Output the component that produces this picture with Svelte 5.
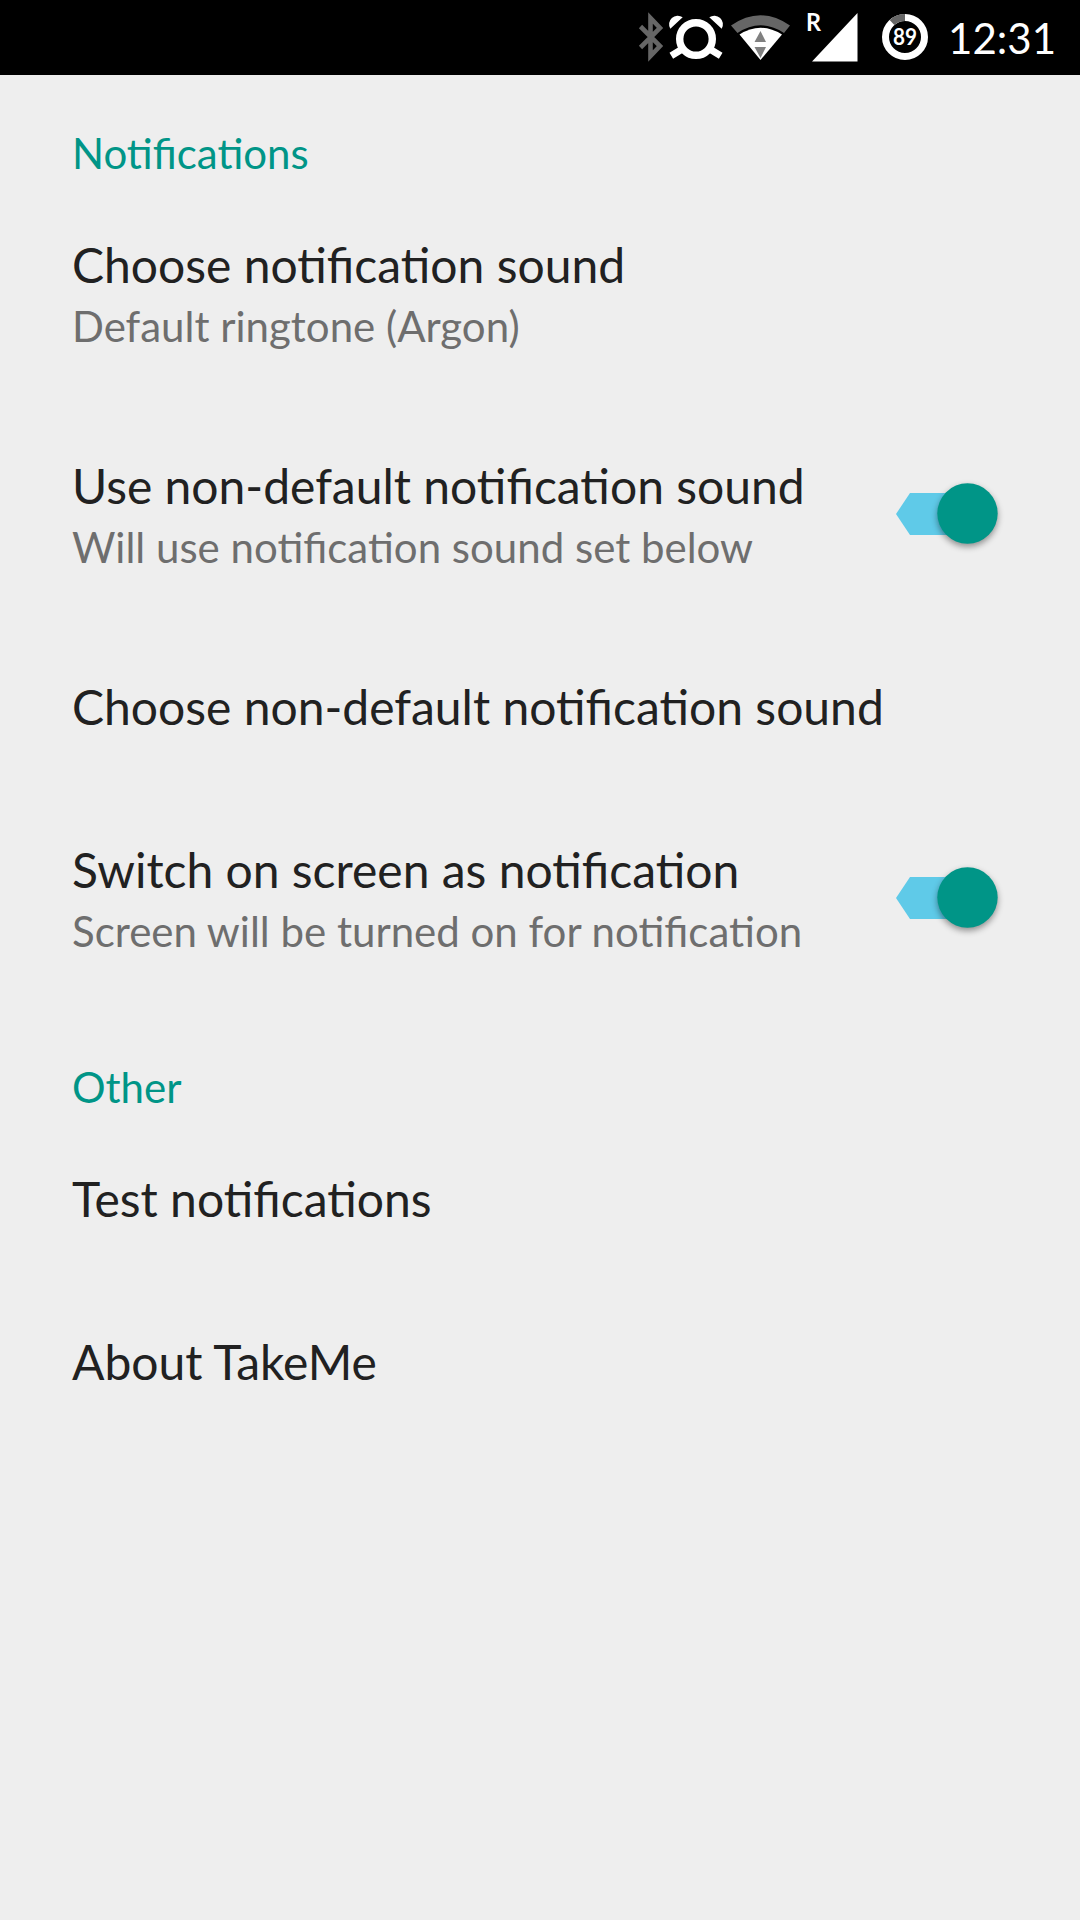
<script>
  const sections = [
    {
      title: 'Notifications',
      items: [
        { title: 'Choose notification sound', summary: 'Default ringtone (Argon)' },
        { title: 'Use non-default notification sound', summary: 'Will use notification sound set below', toggle: true },
        { title: 'Choose non-default notification sound' },
        { title: 'Switch on screen as notification', summary: 'Screen will be turned on for notification', toggle: true }
      ]
    },
    {
      title: 'Other',
      items: [{ title: 'Test notifications' }, { title: 'About TakeMe' }]
    }
  ];
</script>

<div class="screen">
  <header class="status">
    <svg class="icons" width="320" height="75" viewBox="620 0 320 75">
      <path d="M640.5 26.5 L660 46 L650.5 56 V18 L660 28 L640.5 47.5" fill="none" stroke="#666" stroke-width="4.6" />
      <g fill="#fff">
        <path d="M670.3 28.7 A8.6 8.6 0 0 1 682.7 17.3 Z" />
        <path d="M721.700 28.700 A8.600 8.600 0 0 0 709.300 17.300 Z" />
      </g>
      <circle cx="696" cy="39" r="16.300" fill="none" stroke="#fff" stroke-width="7.400" />
      <path d="M684 48 L671.300 55.700 M708 48 L720.700 55.700" stroke="#fff" stroke-width="7" />
      <path d="M731 25.500 Q760.500 5 790 25.500 L784 33 Q760.500 17.500 737.500 33 Z" fill="#666" />
      <path d="M739.500 34.500 Q760.500 21 782 34.500 L760.500 60 Z" fill="#fff" />
      <path d="M760.500 31 L766 42 H754.500 Z M754.500 47 H766 L760.500 58 Z" fill="#808080" />
      <text x="806" y="30.500" class="roaming" textLength="15" lengthAdjust="spacingAndGlyphs">R</text>
      <path d="M857.500 13 V61.500 H812 Z" fill="#fff" />
      <circle cx="905" cy="37" r="19.500" fill="none" stroke="#fff" stroke-width="7" />
      <path d="M892 22.500 A19.500 19.500 0 0 1 905 17.500" fill="none" stroke="#666" stroke-width="7" />
      <text x="905" y="44.800" class="level" textLength="24" lengthAdjust="spacingAndGlyphs">89</text>
    </svg>
    <time>12:31</time>
  </header>

  <main>
    {#each sections as section}
      <section>
        <h2>{section.title}</h2>
        {#each section.items as item}
          <div class="row">
            <div class="label">
              <div class="title">{item.title}</div>
              {#if item.summary}<div class="summary">{item.summary}</div>{/if}
            </div>
            {#if item.toggle}
              <svg class="switch" width="116" height="84" viewBox="0 0 116 84">
                <path d="M0 41 L14 20 H70 V62 H14 Z" fill="#5fcae8" />
                <circle class="thumb" cx="71.500" cy="40.500" r="30.200" fill="#009587" />
              </svg>
            {/if}
          </div>
        {/each}
      </section>
    {/each}
  </main>
</div>

<style>
  :global(body) {
    margin: 0;
    background: #eee;
  }
  .screen {
    width: 1080px;
    height: 1920px;
    overflow: hidden;
    background: #eee;
    font-family: Lato, Carlito, sans-serif;
    color: #212121;
  }
  .status {
    display: flex;
    align-items: center;
    justify-content: flex-end;
    height: 75px;
    padding-right: 24px;
    box-sizing: border-box;
    background: #000;
    color: #fff;
  }
  .icons {
    flex: none;
  }
  time {
    width: 116px;
    padding-top: 2px;
    text-align: right;
    font-size: 42px;
    line-height: 73px;
    white-space: nowrap;
  }
  .roaming {
    font-size: 24px;
    font-weight: 700;
    fill: #fff;
  }
  .level {
    font-size: 23.5px;
    font-weight: 700;
    fill: #fff;
    text-anchor: middle;
  }
  section + section {
    margin-top: -1px;
  }
  h2 {
    margin: 0;
    padding: 53px 72px 6px;
    font-size: 42px;
    font-weight: 400;
    line-height: 50px;
    color: #009587;
  }
  .row {
    display: flex;
    align-items: center;
    justify-content: space-between;
    padding: 52px 68px 53px 72px;
  }
  .title {
    font-size: 48px;
    line-height: 58px;
    white-space: nowrap;
  }
  .summary {
    padding-top: 7px;
    font-size: 42px;
    line-height: 51px;
    color: #6e6e6e;
    white-space: nowrap;
  }
  .switch {
    flex: none;
    overflow: visible;
  }
  .thumb {
    filter: drop-shadow(0 3px 3px rgba(0, 0, 0, 0.4));
  }
</style>
